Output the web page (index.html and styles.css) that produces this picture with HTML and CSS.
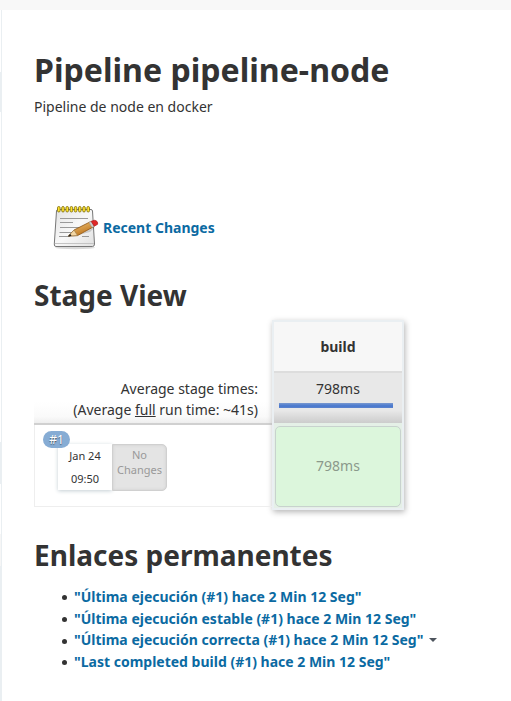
FILE: index.html
```
<!DOCTYPE html>
<html lang="es">
<head>
<meta charset="utf-8">
<title>Pipeline pipeline-node</title>
<link rel="stylesheet" href="styles.css">
</head>
<body>
<div class="topbar"></div>
<div class="page">
  <div class="rail">
    <i class="gap-a"></i><i class="mark-a"></i><i class="gap-b"></i><i class="mark-b"></i><i class="gap-c"></i><i class="pale"></i><i class="rest"></i>
  </div>
  <main>
    <h1>Pipeline pipeline-node</h1>
    <p class="desc">Pipeline de node en docker</p>
    <div class="recent">
      <svg width="48" height="48" viewBox="0 0 48 48">
        <defs>
          <linearGradient id="paper" x1="0" y1="0" x2="1" y2="1"><stop offset="0" stop-color="#e2e2e2"/><stop offset=".5" stop-color="#f8f8f8"/><stop offset="1" stop-color="#e0e0e0"/></linearGradient>
          <linearGradient id="wood" x1="0" y1="0" x2="0.6" y2="1"><stop offset="0" stop-color="#f8cf82"/><stop offset="1" stop-color="#b96f18"/></linearGradient>
        </defs>
        <ellipse cx="23" cy="43.800" rx="20" ry="1.500" fill="#000" opacity=".15"/>
        <path d="M6 5.500H39Q40.300 5.500 40.500 7L42.500 40Q42.500 42.500 40.500 42.500H4Q2 42.500 2.300 40L4.500 7Q4.700 5.500 6 5.500Z" fill="url(#paper)" stroke="#777"/>
        <path d="M2.800 39.500H42" stroke="#c4c4c4"/>
        <path d="M8 14.500H36M8 18.500H21M8 23.500H36M7.500 28.500H28M7 32.500H18M30 32.500H37" stroke="#999"/>
        <g fill="#ffe32e" stroke="#7b6a08" stroke-width=".8">
          <rect x="5.500" y="2.500" width="2.600" height="5.500" rx="1.300"/><rect x="9.700" y="2.500" width="2.600" height="5.500" rx="1.300"/><rect x="13.900" y="2.500" width="2.600" height="5.500" rx="1.300"/><rect x="18.100" y="2.500" width="2.600" height="5.500" rx="1.300"/><rect x="22.300" y="2.500" width="2.600" height="5.500" rx="1.300"/><rect x="26.500" y="2.500" width="2.600" height="5.500" rx="1.300"/><rect x="30.700" y="2.500" width="2.600" height="5.500" rx="1.300"/><rect x="34.900" y="2.500" width="2.600" height="5.500" rx="1.300"/>
        </g>
        <path d="M17 33.500L38 28L43 23L29 30Z" fill="#000" opacity=".15"/>
        <path d="M16.500 32L22 26L38.500 17.700L41.800 22.700L25.500 31.600Z" fill="url(#wood)" stroke="#8a500e" stroke-width=".8"/>
        <path d="M16.500 32L22 26L25.500 31.600Z" fill="#f2d6a4" stroke="#97794a" stroke-width=".6"/>
        <path d="M16 32.500L18.200 29.800L19.500 31.900Z" fill="#222"/>
        <path d="M37 18.500L39.200 17.300L42.300 22.200L40 23.500Z" fill="#ccc" stroke="#888" stroke-width=".4"/>
        <path d="M39.200 17.300L42.500 16.300Q46.200 17 45.600 20.300L42.300 22.200Z" fill="#e02828" stroke="#b01818" stroke-width=".7"/>
      </svg>
      <a>Recent Changes</a>
    </div>
    <h2 class="stage-title">Stage View</h2>
    <section class="stage">
      <div class="runs">
        <div class="average"><span>Average stage times:</span><span>(Average <u>full</u> run time: ~41s)</span></div>
        <div class="run">
          <span class="badge">#1</span>
          <div class="date"><span>Jan 24</span><span>09:50</span></div>
          <div class="changes">No<br>Changes</div>
        </div>
      </div>
      <div class="column">
        <div class="name">build</div>
        <div class="total">798ms<div class="bar"></div></div>
        <div class="cellwrap"><div class="cell">798ms</div></div>
      </div>
    </section>
    <h2 class="links-title">Enlaces permanentes</h2>
    <ul>
      <li><a>"Última ejecución (#1) hace 2 Min 12 Seg"</a></li>
      <li><a>"Última ejecución estable (#1) hace 2 Min 12 Seg"</a></li>
      <li><a>"Última ejecución correcta (#1) hace 2 Min 12 Seg"</a><span class="caret"></span></li>
      <li><a>"Last completed build (#1) hace 2 Min 12 Seg"</a></li>
    </ul>
  </main>
</div>
</body>
</html>
```
FILE: styles.css
```
* { box-sizing: border-box; }
body { margin: 0; height: 701px; overflow: hidden; background: #fff; color: #333; font: 14px/21px "Noto Sans", sans-serif; }
.topbar { height: 10px; background: #f8f8f8; }
.page { display: flex; height: 691px; }
.rail { display: flex; flex-direction: column; width: 2px; border-right: 1px solid #eaeff2; }
.rail i { display: block; }
.gap-a { height: 62px; }
.mark-a { height: 40px; background: #eaeff2; }
.gap-b { height: 330px; }
.mark-b { height: 42px; background: #eaeff2; }
.gap-c { height: 50px; }
.pale { height: 32px; background: #f6f6f6; }
.rest { flex: 1; background: #eaeff2; }
main { padding: 40px 0 0 32px; flex: 1; }
h1, h2 { margin: 0; font-weight: 700; }
h1 { font-size: 32.1px; line-height: 40px; }
h2 { font-size: 28px; line-height: 36px; }
.desc { margin: 6px 0 0; }
.recent { display: flex; align-items: center; gap: 3px; margin: 87px 0 0 18px; height: 48px; }
.recent a { padding-bottom: 2px; }
a { color: #0b6aa2; font-weight: 700; }
.stage-title { margin-top: 25px; }
.stage { display: flex; margin-top: 7px; height: 190px; }
.runs { width: 238px; padding-top: 50px; }
.average { display: flex; flex-direction: column; align-items: flex-end; height: 55px; padding: 8px 14px 0 0; border-bottom: 2px solid #d0d0d0; background: linear-gradient(#fff 60%, #fafafa 88%, #eee); }
.run { position: relative; display: flex; height: 82px; padding: 19px 0 0 23px; border: solid #eee; border-width: 0 0 1px 1px; font-size: 11px; text-align: center; }
.badge { position: absolute; left: 8px; top: 6px; width: 27px; height: 17px; border-radius: 9px; background: #86acd4; color: #fff; font-size: 12px; line-height: 18px; text-shadow: 0 1px 1px #456; }
.date { display: flex; flex-direction: column; width: 54px; height: 46px; line-height: 23px; box-shadow: 0 1px 4px #c4cfd4; }
.changes { width: 55px; height: 47px; padding-top: 2px; border: 1px solid #d0d0d0; border-radius: 0 5px 5px 0; background: #e4e4e4; box-shadow: inset 0 0 3px #ccc; color: #999; line-height: 15px; }
.column { width: 132px; height: 190px; border: 2px solid #eaeff2; box-shadow: 1px 2px 6px #b4b4b4; text-align: center; }
.name { height: 49px; background: #f7f7f7; font-weight: 700; line-height: 49px; }
.total { height: 52px; padding-top: 5px; border-top: 2px solid #ddd; background: linear-gradient(#e8e8e8 75%, #ccc); }
.bar { width: 114px; height: 5px; margin: 4px 0 0 5px; background: linear-gradient(#7898cf, #4777ce 60%, #5c83cb); }
.cellwrap { height: 85px; padding: 3px 1px 1px; background: #e5f0e7; }
.cell { height: 81px; border: 1px solid #c8d2ce; border-radius: 5px; background: #dcf6dc; color: #8b998b; line-height: 78px; }
.links-title { margin-top: 27px; }
ul { margin: 13px 0 0; padding-left: 28px; list-style: none; }
li { display: flex; align-items: center; height: 21.7px; line-height: 21.7px; }
li::before { content: ""; width: 5px; height: 5px; margin: 2px 7px 0 0; border-radius: 50%; background: #333; }
.caret { margin: 0 0 1px 6px; border: solid transparent; border-width: 4px 4px 0; border-top-color: #4d545d; }
```
